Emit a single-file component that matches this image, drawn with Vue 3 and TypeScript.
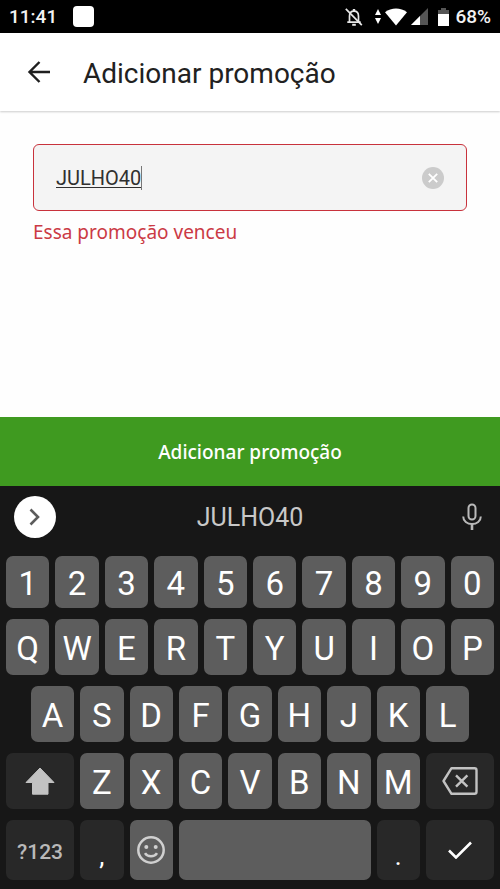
<script setup lang="ts">
import { ref } from 'vue'

interface Key {
  id: string
  label?: string
  icon?: 'shift' | 'backspace' | 'emoji' | 'enter'
  aria?: string
  span: number
  start?: number
  kind?: string
}

const code = ref('JULHO40')

const letters = (chars: string): Key[] =>
  chars.split('').map((c) => ({ id: c, label: c, span: 2 }))

const homeRow = letters('ASDFGHJKL')
homeRow[0].start = 2

const rows: Key[][] = [
  letters('1234567890'),
  letters('QWERTYUIOP'),
  homeRow,
  [
    { id: 'shift', icon: 'shift', aria: 'Shift', span: 3, kind: 'dark' },
    ...letters('ZXCVBNM'),
    { id: 'backspace', icon: 'backspace', aria: 'Apagar', span: 3, kind: 'dark' },
  ],
  [
    { id: 'symbols', label: '?123', span: 3, kind: 'dark symbols' },
    { id: 'comma', label: ',', span: 2, kind: 'dark punct' },
    { id: 'emoji', icon: 'emoji', aria: 'Emoji', span: 2 },
    { id: 'space', aria: 'Espaço', span: 8 },
    { id: 'period', label: '.', span: 2, kind: 'dark punct' },
    { id: 'enter', icon: 'enter', aria: 'Concluir', span: 3, kind: 'dark' },
  ],
]

function press(key: Key) {
  if (key.id === 'backspace') code.value = code.value.slice(0, -1)
  else if (key.id === 'space') code.value += ' '
  else if (key.label && key.id !== 'symbols') code.value += key.label
}

function place(key: Key) {
  return { gridColumn: key.start ? `${key.start} / span ${key.span}` : `span ${key.span}` }
}
</script>

<template>
  <div class="screen">
    <div class="status">
      <span class="time">11:41</span>
      <span class="notice"></span>
      <div class="indicators">
        <svg width="20" height="20" viewBox="0 0 20 20" fill="none" stroke="#e6e6e6" stroke-width="1.7">
          <path d="M5.500 15V9.200c0-3 1.800-5 4.500-5s4.500 2 4.500 5V15M3.300 15.200h13.400" />
          <path d="M10 4.500V2" stroke-width="2.400" />
          <path d="M8.200 17.800h3.600" stroke-width="2" />
          <path d="M1.800 1.800l16 16.400" />
        </svg>
        <svg class="data" width="6" height="16" viewBox="0 0 6 16" fill="#fff">
          <path d="M3 0l3 6H0zM3 15l3-6H0z" />
        </svg>
        <svg class="wifi" width="22" height="18" viewBox="0 0 22 18" fill="#fff">
          <path d="M0 4.200C6.300-.8 15.700-.8 22 4.200L11 17.500z" />
        </svg>
        <svg class="signal" width="17" height="17" viewBox="0 0 17 17">
          <path d="M17 0v17H0z" fill="#555" />
          <path d="M9 8v9H0z" fill="#fff" />
        </svg>
        <svg class="battery" width="11" height="18" viewBox="0 0 11 18">
          <path d="M3 0h5v2h3v5H0V2h3z" fill="#555" />
          <path d="M0 6h11v12H0z" fill="#fff" />
        </svg>
        <span class="percent">68%</span>
      </div>
    </div>

    <header class="appbar">
      <button class="back" type="button" aria-label="Voltar">
        <svg width="24" height="24" viewBox="0 0 24 24" fill="none" stroke="#1f1f1f" stroke-width="2.400">
          <path d="M23 12H2.500M12.500 2L2.500 12l10 10" />
        </svg>
      </button>
      <h1>Adicionar promoção</h1>
    </header>

    <main class="content">
      <div class="field">
        <input v-model="code" type="text" aria-label="Código da promoção" aria-describedby="code-error" aria-invalid="true" />
        <span class="caret"></span>
        <button class="clear" type="button" aria-label="Limpar" @click="code = ''">
          <svg width="22" height="22" viewBox="0 0 22 22">
            <circle cx="11" cy="11" r="11" fill="#cbcbcb" />
            <path d="M6.800 6.800l8.400 8.400M15.200 6.800l-8.400 8.400" stroke="#fff" stroke-width="1.800" />
          </svg>
        </button>
      </div>
      <p id="code-error" class="error">Essa promoção venceu</p>
    </main>

    <button class="submit" type="button">Adicionar promoção</button>

    <section class="keyboard" aria-label="Teclado">
      <div class="suggestions">
        <button class="expand" type="button" aria-label="Mais opções">
          <svg width="42" height="42" viewBox="0 0 42 42" fill="none" stroke="#5c5c5c" stroke-width="2.600">
            <path d="M16.500 13.500l7.500 7.500-7.500 7.500" />
          </svg>
        </button>
        <button class="suggestion" type="button">JULHO40</button>
        <button class="mic" type="button" aria-label="Entrada por voz">
          <svg width="28" height="28" viewBox="-4 0 28 28" fill="none" stroke="#b9b9b9" stroke-width="2">
            <rect x="6.500" y="1.500" width="7" height="15" rx="3.500" />
            <path d="M1.200 13.500c0 4.500 4 7.500 8.800 7.500s8.800-3 8.800-7.500" />
            <path d="M10 21v6" stroke-width="2.600" />
          </svg>
        </button>
      </div>
      <div class="keys">
        <template v-for="(row, r) in rows" :key="r">
          <button
            v-for="key in row"
            :key="key.id"
            type="button"
            class="key"
            :class="[key.kind, { glyph: key.label }]"
            :style="place(key)"
            :aria-label="key.aria"
            @click="press(key)"
          >
            <svg v-if="key.icon === 'shift'" width="30" height="28" viewBox="0 0 30 28" fill="#c2c2c2" stroke="#c2c2c2" stroke-width="1" stroke-linejoin="round">
              <path d="M15 1L29 15.500H23V27.200H7.500V15.500H1z" />
            </svg>
            <svg v-else-if="key.icon === 'backspace'" width="36" height="28" viewBox="0 0 36 28" fill="none" stroke="#c2c2c2" stroke-width="2.400" stroke-linejoin="round">
              <path d="M9.500 1.200H32.500a2 2 0 0 1 2 2V24.800a2 2 0 0 1-2 2H9.500L1.500 14z" />
              <path d="M14 8.300l11.400 11.400M25.400 8.300l-11.400 11.400" />
            </svg>
            <svg v-else-if="key.icon === 'emoji'" width="28" height="28" viewBox="0 0 28 28" fill="none" stroke="#d0d0d0" stroke-width="2.500">
              <circle cx="14" cy="14" r="12.700" />
              <path d="M8 17.200c2.600 4.200 9.400 4.200 12 0" />
              <circle cx="9.300" cy="11" r="2" fill="#d0d0d0" stroke="none" />
              <circle cx="18.700" cy="11" r="2" fill="#d0d0d0" stroke="none" />
            </svg>
            <svg v-else-if="key.icon === 'enter'" width="24" height="18" viewBox="0 0 24 18" fill="none" stroke="#fff" stroke-width="2.600">
              <path d="M1 9.500l7 7L23 1.500" />
            </svg>
            <template v-else>{{ key.label }}</template>
          </button>
        </template>
      </div>
    </section>
  </div>
</template>

<style>
body {
  margin: 0;
  background: #fff;
}
</style>

<style scoped>
.screen {
  display: flex;
  flex-direction: column;
  min-height: 100vh;
  background: #fefefe;
  font-family: Roboto, sans-serif;
}

button {
  border: 0;
  padding: 0;
  background: none;
  color: inherit;
  font-family: inherit;
}

svg {
  display: block;
}

.status {
  display: flex;
  align-items: center;
  height: 33px;
  padding: 0 9px;
  background: #000;
  color: #f2f2f2;
  font-size: 19px;
  font-weight: 500;
}

.notice {
  width: 21px;
  height: 21px;
  margin-left: 16px;
  border-radius: 4px;
  background: #fff;
}

.indicators {
  display: flex;
  align-items: center;
  margin-left: auto;
}

.data {
  margin-left: 11px;
}

.wifi,
.signal {
  margin-left: 4px;
}

.battery {
  margin-left: 10px;
}

.percent {
  margin-left: 6px;
}

.appbar {
  display: flex;
  align-items: center;
  gap: 32px;
  height: 78px;
  padding: 0 27px;
  background: #fff;
  box-shadow: 0 1px 2px rgba(0, 0, 0, 0.2);
}

h1 {
  margin: 0;
  padding-top: 2px;
  color: #212121;
  font-size: 28px;
  font-weight: 400;
}

.content {
  flex: 1;
  padding: 33px 33px 0;
}

.field {
  display: flex;
  align-items: center;
  box-sizing: border-box;
  height: 67px;
  padding: 0 22px;
  border: 1px solid #c8323c;
  border-radius: 6px;
  background: #f4f4f4;
}

input {
  field-sizing: content;
  min-width: 4px;
  padding: 0;
  border: 0;
  outline: 0;
  background: none;
  color: #303030;
  font-family: Roboto, sans-serif;
  font-size: 20px;
  line-height: 28px;
  text-decoration: underline;
  text-underline-offset: 2px;
  text-decoration-thickness: 1px;
}

.caret {
  width: 1px;
  height: 24px;
  background: #777;
}

.clear {
  margin-left: auto;
}

.error {
  margin: 7px 0 0;
  color: #cb3a45;
  font-family: "Noto Sans", sans-serif;
  font-size: 19px;
  line-height: 28px;
}

.submit {
  height: 69px;
  background: #3f9a20;
  color: #fff;
  font-family: "Noto Sans", sans-serif;
  font-size: 19px;
  font-weight: 500;
}

.keyboard {
  padding: 0 6px 9px;
  background: #171717;
}

.suggestions {
  display: grid;
  grid-template-columns: 1fr auto 1fr;
  align-items: center;
  height: 62px;
  margin-bottom: 8px;
  padding: 0 8px;
}

.expand {
  justify-self: start;
  border-radius: 50%;
  background: #fff;
}

.mic {
  justify-self: end;
}

.suggestion {
  color: #c8c8c8;
  font-size: 25px;
}

.keys {
  display: grid;
  grid-template-columns: repeat(20, minmax(0, 1fr));
  grid-template-rows: 52px 56px 56px 56px 60px;
  gap: 11px 6px;
}

.key {
  display: flex;
  align-items: center;
  justify-content: center;
  border-radius: 7px;
  background: #5d5d5d;
  color: #fff;
  font-size: 33px;
  line-height: 40px;
}

.glyph {
  padding-top: 3px;
}

.dark {
  background: #282828;
}

.symbols {
  color: #b9b9b9;
  font-size: 21px;
  font-weight: 500;
}

.punct {
  padding-top: 12px;
  font-size: 26px;
}
</style>
